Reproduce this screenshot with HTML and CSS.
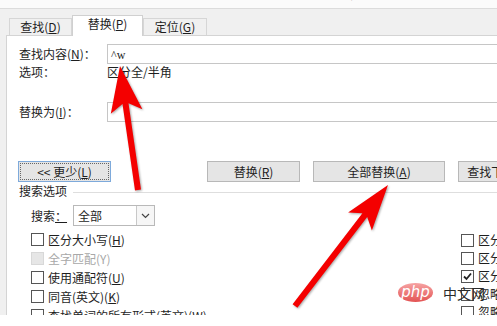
FILE: index.html
```html
<!DOCTYPE html>
<html lang="zh-CN">
<head>
    <meta charset="UTF-8">
    <title>查找和替换</title>
    <link rel="stylesheet" href="styles.css">
</head>
<body>
    <!-- 창 제목 (위쪽이 잘린 상태) -->
    <div class="titlebar"><span>查找和替换</span></div>

    <div class="dialog">
        <div class="tabs">
            <div class="tab">查找(<u>D</u>)</div>
            <div class="tab active">替换(<u>P</u>)</div>
            <div class="tab last">定位(<u>G</u>)</div>
        </div>

        <div class="panel">
            <div class="field">
                <label class="lbl">查找内容(<u>N</u>)：</label>
                <div class="input"><span class="code">^w</span></div>
            </div>
            <div class="field opts">
                <span class="lbl">选项：</span>
                <span>区分全/半角</span>
            </div>
            <div class="field replace">
                <label class="lbl">替换为(<u>I</u>)：</label>
                <div class="input"></div>
            </div>

            <div class="buttons">
                <button class="btn more">&lt;&lt; 更少(<u>L</u>)</button>
                <div class="actions">
                    <button class="btn">替换(<u>R</u>)</button>
                    <button class="btn wide">全部替换(<u>A</u>)</button>
                    <button class="btn">查找下一处(<u>F</u>)</button>
                </div>
            </div>

            <div class="section-title"><span>搜索选项</span><i></i></div>

            <div class="options">
                <div class="col-left">
                    <div class="search-row">
                        <span class="search-lbl">搜索<u>：</u></span>
                        <div class="select">
                            <span class="sel-text">全部</span>
                            <span class="sel-btn">
                                <svg width="9" height="6" viewBox="0 0 9 6"><path d="M1 1 L4.5 4.5 L8 1" fill="none" stroke="#444" stroke-width="1.2"/></svg>
                            </span>
                        </div>
                    </div>
                    <div class="check"><span class="box"></span>区分大小写(<u>H</u>)</div>
                    <div class="check disabled"><span class="box"></span>全字匹配(Y)</div>
                    <div class="check"><span class="box"></span>使用通配符(<u>U</u>)</div>
                    <div class="check"><span class="box"></span>同音(英文)(<u>K</u>)</div>
                    <div class="check"><span class="box"></span>查找单词的所有形式(英文)(<u>W</u>)</div>
                </div>
                <div class="col-right">
                    <div class="check"><span class="box"></span>区分前缀(<u>X</u>)</div>
                    <div class="check"><span class="box"></span>区分后缀(<u>T</u>)</div>
                    <div class="check"><span class="box"><svg width="11" height="11" viewBox="0 0 11 11"><path d="M2 5.5 L4.5 8 L9 2.5" fill="none" stroke="#222" stroke-width="1.8"/></svg></span>区分全/半角(<u>M</u>)</div>
                    <div class="check"><span class="box"></span>忽略标点符号(<u>S</u>)</div>
                    <div class="check"><span class="box"></span>忽略空格(<u>W</u>)</div>
                </div>
            </div>
        </div>
    </div>

    <!-- 워터마크 -->
    <div class="watermark">
        <span class="php">php</span>
        <span class="cn">中文网</span>
    </div>

    <!-- 빨간 화살표 -->
    <svg class="arrows" width="497" height="326" viewBox="0 0 497 326">
        <polygon points="120,66 142.4,109.2 128.5,103.2 141,189.6 135,190.4 122.5,104 110.8,113.8" fill="#f40000"/>
        <polygon points="388,185 371.9,230.6 367.2,216.9 297.4,307.8 292.6,304.2 362.4,213.3 348.1,212.4" fill="#f40000"/>
    </svg>
</body>
</html>
```

FILE: styles.css
```css
* {
    box-sizing: border-box;
}
body {
    margin: 0;
    width: 497px;
    height: 326px;
    overflow: hidden;
    position: relative;
    background: #fff;
    font: 12px/16px "Noto Sans CJK SC", sans-serif;
    color: #1e1e1e;
}
u {
    text-decoration: underline;
    text-underline-offset: 1px;
}

/* 제목줄 */
.titlebar {
    height: 8px;
    overflow: hidden;
    padding-left: 313px;
    background: #fbfbfb;
}
.titlebar span {
    display: block;
    margin-top: -12px;
    line-height: 12px;
    color: #666;
}

.dialog {
    height: 307px;
    border-top: 1px solid #dcdcdc;
    background: #f0f0f0;
    overflow: hidden;
}

/* 탭 */
.tabs {
    display: flex;
    align-items: flex-end;
    height: 26px;
    padding-left: 9px;
}
.tab {
    width: 63px;
    height: 17px;
    border: 1px solid #d6d6d6;
    border-bottom: 0;
    text-align: center;
    line-height: 16px;
}
.tab.last {
    width: 64px;
}
.tab.active {
    width: 71px;
    height: 21px;
    margin-bottom: -1px;
    background: #fff;
    border-color: #d0d0d0;
    position: relative;
}

/* 흰색 본문 */
.panel {
    height: 282px;
    margin-left: 6px;
    border-left: 1px solid #d4d4d4;
    border-top: 1px solid #d4d4d4;
    background: #fff;
    padding: 8px 0 0 12px;
}
.field {
    display: flex;
    align-items: center;
}
.lbl {
    width: 88px;
    flex-shrink: 0;
}
.input {
    width: 420px;
    flex-shrink: 0;
    height: 20px;
    border: 1px solid #c6c6c6;
    padding-left: 3px;
    line-height: 17px;
}
.code {
    font: 12px "Liberation Serif", serif;
}
.opts {
    height: 16px;
}
.replace {
    margin-top: 22px;
}

/* 버튼 */
.buttons {
    display: flex;
    margin-top: 39px;
    margin-left: -1px;
}
.btn {
    width: 93px;
    height: 21px;
    flex-shrink: 0;
    padding: 0;
    border: 1px solid #b8b8b8;
    background: #e5e5e5;
    font: inherit;
    color: inherit;
    line-height: 18px;
}
.btn.wide {
    width: 132px;
}
.btn.more {
    border-color: #7eaadb;
    outline: 1px dotted #666;
    outline-offset: -3px;
}
.actions {
    display: flex;
    gap: 13px;
    margin-left: 96px;
}

.section-title {
    display: flex;
    align-items: center;
    height: 18px;
}
.section-title i {
    flex: 1;
    height: 1px;
    margin-left: 6px;
    margin-top: 2px;
    background: #dedede;
}

/* 검색 옵션 */
.options {
    display: grid;
    grid-template-columns: 430px 1fr;
    padding-left: 12px;
}
.search-row {
    display: flex;
    align-items: center;
    margin-top: 5px;
    margin-bottom: 4px;
}
.search-lbl {
    width: 42px;
}
.select {
    display: flex;
    width: 82px;
    height: 21px;
    border: 1px solid #b9b9b9;
}
.sel-text {
    flex: 1;
    padding-left: 4px;
    line-height: 19px;
}
.sel-btn {
    width: 18px;
    border-left: 1px solid #c8c8c8;
    background: #f6f6f6;
    display: flex;
    align-items: center;
    justify-content: center;
}
.check {
    display: flex;
    align-items: center;
    height: 19px;
    white-space: nowrap;
}
.box {
    width: 13px;
    height: 13px;
    margin-right: 4px;
    flex-shrink: 0;
    border: 1px solid #555;
    background: #fff;
    display: flex;
    align-items: center;
    justify-content: center;
}
.check.disabled {
    color: #a8a8a8;
}
.check.disabled .box {
    border-color: #d8d8d8;
    background: #e6e6e6;
}
.col-right {
    padding-top: 31px;
}
.col-right .check {
    height: 18px;
}

/* 워터마크 */
.watermark {
    position: absolute;
    left: 398px;
    top: 283px;
    display: flex;
    align-items: center;
    gap: 10px;
}
.php {
    width: 35px;
    height: 19px;
    border-radius: 50%;
    background: linear-gradient(#f6a3a3, #e35454);
    color: #fff;
    font: italic 15px/18px "DejaVu Sans", sans-serif;
    text-align: center;
}
.cn {
    font-size: 14px;
    color: #2a2a2a;
}

.arrows {
    position: absolute;
    left: 0;
    top: 0;
    pointer-events: none;
    filter: drop-shadow(1px 1px 1px rgba(0,0,0,0.35));
}
```
